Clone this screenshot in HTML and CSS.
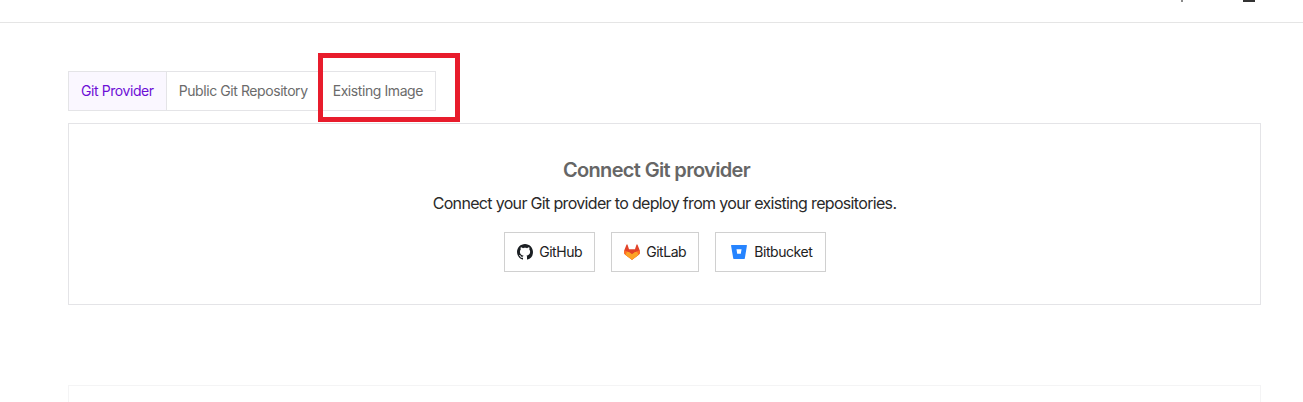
FILE: index.html
```html
<!DOCTYPE html>
<html lang="en">
<head>
<meta charset="utf-8">
<title>Connect Git provider</title>
<link rel="stylesheet" href="styles.css">
</head>
<body>
<header class="topbar">
  <span class="stub stub-thin"></span>
  <span class="stub stub-wide"></span>
</header>
<main class="content">
  <div class="tabs">
    <button class="tab tab-active">Git Provider</button>
    <button class="tab">Public Git Repository</button>
    <button class="tab">Existing Image</button>
    <span class="highlight"></span>
  </div>
  <section class="panel">
    <h2 class="title">Connect Git provider</h2>
    <p class="lead">Connect your Git provider to deploy from your existing repositories.</p>
    <div class="providers">
      <a class="provider">
        <svg class="icon" viewBox="0 0 16 16"><path fill="#1b1f23" d="M8 0C3.58 0 0 3.58 0 8c0 3.54 2.29 6.53 5.47 7.59.4.07.55-.17.55-.38 0-.19-.01-.82-.01-1.49-2.01.37-2.53-.49-2.69-.94-.09-.23-.48-.94-.82-1.13-.28-.15-.68-.52-.01-.53.63-.01 1.08.58 1.23.82.72 1.21 1.87.87 2.33.66.07-.52.28-.87.51-1.07-1.78-.2-3.64-.89-3.64-3.95 0-.87.31-1.59.82-2.15-.08-.2-.36-1.02.08-2.12 0 0 .67-.21 2.2.82.64-.18 1.32-.27 2-.27s1.36.09 2 .27c1.53-1.04 2.2-.82 2.2-.82.44 1.1.16 1.92.08 2.12.51.56.82 1.27.82 2.15 0 3.07-1.87 3.75-3.65 3.95.29.25.54.73.54 1.48 0 1.07-.01 1.93-.01 2.2 0 .21.15.46.55.38A8.01 8.01 0 0 0 16 8c0-4.42-3.58-8-8-8z"/></svg>
        <span class="provider-name">GitHub</span>
      </a>
      <a class="provider">
        <svg class="icon" viewBox="0 0 24 24">
          <path fill="#e24329" d="m23.6 9.593-.033-.086L20.3.98a.851.851 0 0 0-.336-.405.875.875 0 0 0-1 .054.875.875 0 0 0-.29.44L16.47 7.818H7.537L5.333 1.07a.857.857 0 0 0-.29-.441.875.875 0 0 0-1-.054.859.859 0 0 0-.336.405L.433 9.502l-.032.086a6.066 6.066 0 0 0 2.012 7.01l.01.009.03.021 4.977 3.727 2.462 1.863 1.5 1.132a1.008 1.008 0 0 0 1.22 0l1.499-1.132 2.461-1.863 5.006-3.75.012-.01a6.068 6.068 0 0 0 2.01-7.002z"/>
          <path fill="#fc6d26" d="M.4 9.6c3 .5 6.5 2 9 4L12 15.5l2.6-1.9c2.5-2 6-3.5 9-4a6.07 6.07 0 0 1-2 7l-5 3.75-2.46 1.86-1.5 1.13a1 1 0 0 1-1.22 0l-1.5-1.13-2.46-1.86-5-3.75a6.07 6.07 0 0 1-2.06-7z"/>
          <path fill="#fca326" d="M12 15.5l-4.6-3.4c-2-.9-3.5-1.7-5 4.5l5 3.75 2.46 1.86 1.5 1.13a1 1 0 0 0 1.22 0l1.5-1.13 2.46-1.86 5-3.75c-1.5-6.2-3-5.4-5-4.5z"/>
        </svg>
        <span class="provider-name">GitLab</span>
      </a>
      <a class="provider provider-wide">
        <svg class="icon" viewBox="0 0 16 16"><path fill="#2684ff" fill-rule="evenodd" d="M.5 1h15c.3 0 .5.25.45.55L13.8 14.6c-.05.25-.25.4-.5.4H2.8c-.25 0-.5-.2-.55-.45L.05 1.55C0 1.25.2 1 .5 1zm5 4.2.7 4.6h3.6l.75-4.6z"/></svg>
        <span class="provider-name">Bitbucket</span>
      </a>
    </div>
  </section>
  <section class="panel-next"></section>
</main>
</body>
</html>
```

FILE: styles.css
```css
* {
  box-sizing: border-box;
}

html,
body {
  height: 402px;
  overflow: hidden;
}

body {
  margin: 0;
  background: #fff;
  font-family: Inter, "Liberation Sans", sans-serif;
  color: #1f1f1f;
}

.topbar {
  display: flex;
  justify-content: flex-end;
  height: 23px;
  border-bottom: 1px solid #e5e5e5;
}

.stub {
  display: block;
  height: 2px;
}

.stub-thin {
  width: 2px;
  background: #8a8a8a;
  margin-right: 60px;
}

.stub-wide {
  width: 12px;
  background: #333;
  margin-right: 48px;
}

.content {
  padding: 48px 42px 0 68px;
}

.tabs {
  position: relative;
  display: flex;
  width: fit-content;
  height: 40px;
  border: 1px solid #e4e4e7;
}

.tab {
  height: 38px;
  padding: 0 12px;
  border: 0;
  border-right: 1px solid #e4e4e7;
  background: #fff;
  font: 400 14px/38px Inter, "Liberation Sans", sans-serif;
  letter-spacing: -0.42px;
  color: #6b6b6b;
}

.tab:last-of-type {
  border-right: 0;
}

.tab-active {
  background: #faf7ff;
  color: #6d0fd6;
}

.highlight {
  position: absolute;
  left: 249px;
  top: -19px;
  width: 142px;
  height: 69px;
  border: 5px solid #e81c2c;
}

.panel {
  display: flex;
  flex-direction: column;
  align-items: center;
  height: 182px;
  margin-top: 12px;
  border: 1px solid #e4e4e7;
}

.title {
  margin: 34px 16px 0 0;
  font-size: 20px;
  line-height: 24px;
  font-weight: 600;
  letter-spacing: -0.66px;
  color: #666;
}

.lead {
  margin: 10px 0 0;
  font-size: 16px;
  line-height: 22px;
  letter-spacing: -0.67px;
  color: #2a2a2a;
}

.providers {
  display: flex;
  gap: 16px;
  margin: 18px 0 0 1px;
}

.provider {
  display: flex;
  align-items: center;
  gap: 6px;
  height: 40px;
  padding: 0 12px;
  border: 1px solid #d0d0d0;
  font-size: 14px;
  letter-spacing: -0.45px;
  color: #222;
}

.provider-name {
  margin-bottom: 2px;
}

.provider-wide {
  gap: 7px;
  padding: 0 12.5px 0 15px;
}

.icon {
  width: 16px;
  height: 16px;
  flex: none;
}

.panel-next {
  height: 17px;
  margin-top: 80px;
  border: 1px solid #f4f4f5;
  border-bottom: 0;
}
```
